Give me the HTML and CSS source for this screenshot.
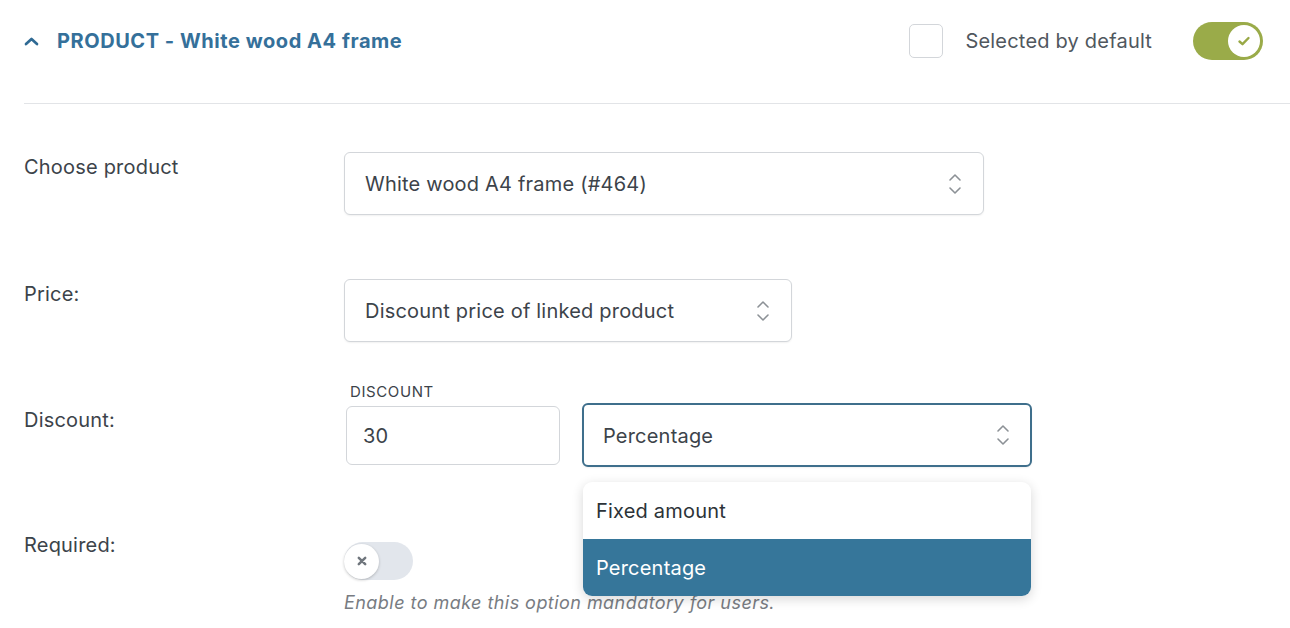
FILE: index.html
```html
<!DOCTYPE html>
<html>
<head>
<meta charset="utf-8">
<link rel="stylesheet" href="styles.css">
</head>
<body>
<div class="panel">
  <div class="header">
    <div class="title-wrap">
      <svg class="chev-up" width="15" height="10" viewBox="0 0 15 10"><path d="M2 8 L7.5 3 L13 8" fill="none" stroke="#2f6a94" stroke-width="2.7" stroke-linecap="round" stroke-linejoin="round"/></svg>
      <span class="title">PRODUCT - White wood A4 frame</span>
    </div>
    <div class="header-right">
      <span class="checkbox"></span>
      <span class="sel-text">Selected by default</span>
      <span class="toggle on"><span class="thumb"><svg width="14" height="12" viewBox="0 0 14 12"><path d="M2.5 6.5 L5.5 9.2 L11.5 3" fill="none" stroke="#98a845" stroke-width="2.4" stroke-linecap="round" stroke-linejoin="round"/></svg></span></span>
    </div>
  </div>

  <div class="row row-1">
    <div class="label">Choose product</div>
    <div class="field">
      <div class="select w640"><span>White wood A4 frame (#464)</span>
        <svg class="updown" width="14" height="24" viewBox="0 0 14 24"><path d="M2 8 L7 3 L12 8 M2 16 L7 21 L12 16" fill="none" stroke="#8c9196" stroke-width="1.6" stroke-linecap="round" stroke-linejoin="round"/></svg>
      </div>
    </div>
  </div>

  <div class="row row-2">
    <div class="label">Price:</div>
    <div class="field">
      <div class="select w448"><span>Discount price of linked product</span>
        <svg class="updown" width="14" height="24" viewBox="0 0 14 24"><path d="M2 8 L7 3 L12 8 M2 16 L7 21 L12 16" fill="none" stroke="#8c9196" stroke-width="1.6" stroke-linecap="round" stroke-linejoin="round"/></svg>
      </div>
    </div>
  </div>

  <div class="row row-3">
    <div class="label label-disc">Discount:</div>
    <div class="field">
      <div class="caption">DISCOUNT</div>
      <div class="disc-line">
        <div class="input">30</div>
        <div class="select-wrap">
          <div class="select focus w450"><span>Percentage</span>
            <svg class="updown" width="14" height="24" viewBox="0 0 14 24"><path d="M2 8 L7 3 L12 8 M2 16 L7 21 L12 16" fill="none" stroke="#8c9196" stroke-width="1.6" stroke-linecap="round" stroke-linejoin="round"/></svg>
          </div>
          <div class="menu">
            <div class="opt">Fixed amount</div>
            <div class="opt active">Percentage</div>
          </div>
        </div>
      </div>
    </div>
  </div>

  <div class="row row-4">
    <div class="label">Required:</div>
    <div class="field">
      <span class="toggle off"><span class="thumb"><svg width="12" height="12" viewBox="0 0 12 12"><path d="M2.8 2.8 L9.2 9.2 M9.2 2.8 L2.8 9.2" fill="none" stroke="#70767d" stroke-width="2.5" stroke-linecap="round"/></svg></span></span>
      <div class="help">Enable to make this option mandatory for users.</div>
    </div>
  </div>
</div>
</body>
</html>
```

FILE: styles.css
```css
* { box-sizing: border-box; }
html, body { margin: 0; padding: 0; background: #fff; }
body {
  font-family: Inter, "Noto Sans", "Liberation Sans", sans-serif;
  color: #3c434a;
  font-size: 20px;
  line-height: 24px;
  letter-spacing: 0.2px;
}
.panel { padding-left: 24px; width: 1290px; }

.header {
  height: 104px;
  padding-bottom: 21px;
  padding-right: 27px;
  border-bottom: 1px solid #e2e4e7;
  display: flex;
  align-items: center;
  justify-content: space-between;
}
.title-wrap { display: flex; align-items: center; gap: 18px; }
.chev-up { display: block; margin-top: -1px; }
.title { font-weight: 700; color: #35709a; font-size: 20px; letter-spacing: 0.55px; }
.header-right { display: flex; align-items: center; }
.checkbox {
  width: 34px; height: 34px; border: 1px solid #d3d6da; border-radius: 5px; background: #fff;
  margin-right: 22px;
}
.sel-text { color: #50575e; margin-right: 41px; }

.toggle {
  display: inline-flex; align-items: center;
  width: 70px; height: 38px; border-radius: 19px; position: relative;
}
.toggle.on { background: #9aab49; justify-content: flex-end; padding-right: 3px; }
.toggle.on .thumb {
  width: 32px; height: 32px; border-radius: 50%; background: #fff;
  display: flex; align-items: center; justify-content: center;
}
.toggle.off { background: #e2e6ec; width: 69px; }
.toggle.off .thumb {
  width: 35px; height: 35px; border-radius: 50%; background: #fff;
  display: flex; align-items: center; justify-content: center;
  box-shadow: 0 1px 3px rgba(0,0,0,0.22);
}

.row { display: grid; grid-template-columns: 320px 1fr; }
.label { padding-top: 3px; }
.row-1 { margin-top: 48px; }
.row-2 { margin-top: 64px; }
.row-3 { margin-top: 41px; }
.row-4 { margin-top: 63px; }
.label-disc { padding-top: 25px; }

.select {
  height: 63px; border: 1px solid #d3d6da; border-radius: 6px; background: #fff;
  display: flex; align-items: center; justify-content: space-between;
  padding: 0 21px 0 20px;
  box-shadow: 0 1px 2px rgba(0,0,0,0.06);
}
.select span { margin-top: 1px; }
.updown { display: block; }
.w640 { width: 640px; }
.w448 { width: 448px; }
.w450 { width: 450px; height: 64px; }
.select.focus { border: 2px solid #3f6f8c; padding: 0 20px 0 19px; }

.caption { font-size: 15px; line-height: 18px; color: #3c434a; padding-left: 6px; margin-bottom: 2px; letter-spacing: 0.6px; }
.disc-line { display: flex; align-items: center; }
.input {
  width: 214px; height: 59px; margin-left: 2px; margin-right: 22px;
  border: 1px solid #d3d6da; border-radius: 6px;
  display: flex; align-items: center; padding-left: 16px; padding-top: 2px;
}
.select-wrap { position: relative; }
.menu {
  position: absolute; left: 1px; top: 79px; width: 448px;
  background: #fff; border-radius: 9px; overflow: hidden;
  box-shadow: 0 3px 12px rgba(0,0,0,0.16);
  z-index: 2;
}
.opt { height: 57px; display: flex; align-items: center; padding-left: 13px; color: #2c3338; padding-top: 1px; }
.opt.active { background: #36769a; color: #fff; }

.row-4 .toggle { margin-top: 12px; }
.help { margin-top: 11px; font-style: italic; font-size: 18px; letter-spacing: 0.45px; color: #787c82; }
```
